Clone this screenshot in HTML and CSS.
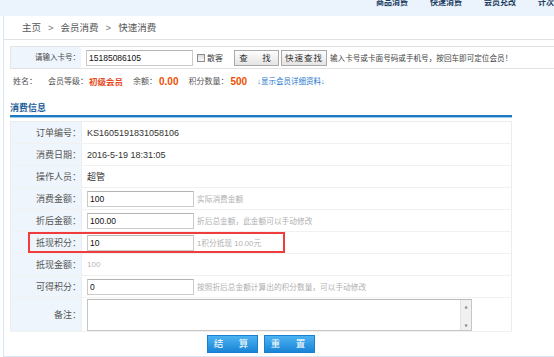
FILE: index.html
```html
<!DOCTYPE html>
<html lang="zh-CN">
<head>
<meta charset="utf-8">
<title>快速消费</title>
<link rel="stylesheet" href="styles.css">
</head>
<body>
<div class="topbar">
  <nav class="topnav">
    <a class="nav-item">商品消费</a><span class="sep"></span>
    <a class="nav-item">快速消费</a><span class="sep"></span>
    <a class="nav-item">会员充改</a><span class="sep"></span>
    <a class="nav-item">计次消费</a>
  </nav>
</div>
<div class="panel">
  <div class="crumb">主页<span class="gt">&gt;</span>会员消费<span class="gt">&gt;</span>快速消费</div>

  <div class="search">
    <div class="search-label">请输入卡号：</div>
    <div class="search-body">
      <input class="inp" type="text" value="15185086105">
      <label class="chk"><span class="box"></span>散客</label>
      <button class="btn-gray btn-find">查　找</button>
      <button class="btn-gray btn-quick">快速查找</button>
      <span class="search-tip">输入卡号或卡面号码或手机号，按回车即可定位会员！</span>
    </div>
  </div>

  <div class="info">
    <span class="info-label name">姓名：</span>
    <span class="info-label">会员等级：</span><span class="lv">初级会员</span>
    <span class="info-label">余额：</span><span class="num">0.00</span>
    <span class="info-label">积分数量：</span><span class="num">500</span>
    <a class="more">↓显示会员详细资料↓</a>
  </div>

  <div class="section-title">消费信息</div>

  <table class="form">
    <tr><th>订单编号：</th><td class="val">KS1605191831058106</td></tr>
    <tr><th>消费日期：</th><td class="val">2016-5-19 18:31:05</td></tr>
    <tr><th>操作人员：</th><td class="val">超管</td></tr>
    <tr><th>消费金额：</th><td><input class="inp" type="text" value="100"><span class="hint">实际消费金额</span></td></tr>
    <tr><th>折后金额：</th><td><input class="inp" type="text" value="100.00"><span class="hint">折后总金额，此金额可以手动修改</span></td></tr>
    <tr><th>抵现积分：</th><td><input class="inp" type="text" value="10"><span class="hint">1积分抵现 10.00元</span></td></tr>
    <tr><th>抵现金额：</th><td class="val muted">100</td></tr>
    <tr><th>可得积分：</th><td><input class="inp" type="text" value="0"><span class="hint">按照折后总金额计算出的积分数量，可以手动修改</span></td></tr>
    <tr class="tall"><th>备注：</th><td>
      <div class="memo">
        <textarea class="memo-text"></textarea>
        <div class="memo-bar"><span class="arr">▲</span><span class="arr">▼</span></div>
      </div>
    </td></tr>
  </table>

  <div class="actions">
    <button class="btn-blue">结　算</button>
    <button class="btn-blue">重　置</button>
  </div>
</div>
<div class="mark"></div>
</body>
</html>
```
FILE: styles.css
```css
* { box-sizing: border-box; }
html, body { margin: 0; padding: 0; }
body {
  width: 554px;
  height: 357px;
  overflow: hidden;
  background: #fff;
  font-family: "Liberation Sans", "Noto Sans CJK TC", sans-serif;
  font-size: 9px;
  color: #444;
  position: relative;
}

/* top bar */
.topbar {
  height: 16px;
  background: #ebf4fc;
  overflow: hidden;
}
.topnav {
  display: flex;
  align-items: flex-start;
  padding-left: 376px;
  gap: 11px;
  margin-top: -2px;
  white-space: nowrap;
}
.nav-item {
  font-size: 8px;
  line-height: 10px;
  font-weight: bold;
  color: #1d3c62;
}
.sep {
  width: 1px;
  height: 8px;
  margin-top: 2px;
  background: #c6ccd3;
}

/* panel */
.panel {
  margin-left: 3px;
  height: 341px;
  border-left: 1px solid #d6e6f4;
  border-bottom: 1px solid #d9e7f4;
}
.crumb {
  height: 24px;
  line-height: 23px;
  padding-left: 18px;
  font-size: 9.5px;
  color: #555;
  border-bottom: 1px solid #e2e2e2;
}
.gt { margin: 0 7px; color: #777; }

/* search */
.search {
  margin-top: 6px;
  margin-left: 6px;
  height: 23px;
  display: flex;
  border-top: 1px solid #e3e3e3;
  border-bottom: 1px solid #e3e3e3;
  border-left: 1px solid #e6e6e6;
}
.search-label {
  width: 70px;
  background: #eff5fc;
  text-align: right;
  font-size: 7.5px;
  line-height: 21px;
  padding-right: 1px;
  color: #444;
}
.search-body {
  display: flex;
  align-items: center;
  padding-left: 5px;
  white-space: nowrap;
}
.inp {
  width: 107px;
  height: 16px;
  border: 1px solid #cacaca;
  border-top-color: #b4b4b4;
  padding: 0 2px;
  margin: 0;
  font-family: inherit;
  font-size: 8.5px;
  color: #111;
  outline: none;
}
.chk {
  display: flex;
  align-items: center;
  margin-left: 4px;
  font-size: 8px;
  color: #444;
}
.box {
  width: 8px;
  height: 8px;
  border: 1px solid #8c8c8c;
  background: linear-gradient(#dcdcdc, #fafafa);
  margin-right: 2px;
}
.btn-gray {
  height: 16px;
  margin: 0;
  padding: 0;
  border: 1px solid #a9a9a9;
  background: linear-gradient(#fdfdfd, #e4e4e4);
  font-family: inherit;
  font-size: 8.5px;
  color: #333;
  line-height: 14px;
}
.btn-find { width: 45px; margin-left: 11px; letter-spacing: 3px; }
.btn-quick { width: 46px; margin-left: 2px; letter-spacing: 1px; }
.search-tip { margin-left: 3px; font-size: 7.6px; color: #444; }

/* info */
.info {
  height: 26px;
  line-height: 26px;
  padding-left: 9px;
  font-size: 8px;
  white-space: nowrap;
  display: flex;
  align-items: center;
}
.info-label { color: #555; margin-left: 10px; }
.info-label.name { margin-left: 0; margin-right: 1px; }
.lv { color: #e8491d; font-weight: bold; font-size: 8.5px; margin-left: 1px; }
.num { color: #f05000; font-weight: bold; font-size: 10px; margin-left: 2px; }
.more { color: #2475cc; margin-left: 10px; font-size: 7.5px; }

/* section */
.section-title {
  margin-left: 6px;
  width: 502px;
  height: 22px;
  padding-top: 7px;
  line-height: 12px;
  font-size: 9px;
  font-weight: bold;
  color: #1d5d98;
  border-bottom: 2px solid #1f79bf;
  box-shadow: 0 1px 0 #9ccaec;
}

/* form table */
.form {
  margin: 4px 0 0 6px;
  width: 502px;
  border-collapse: collapse;
  border: 1px solid #ececec;
}
.form th, .form td {
  height: 22px;
  padding: 0;
  border-bottom: 1px solid #f1f1f1;
}
.form th {
  width: 71px;
  background: #eff5fc;
  border-right: 1px solid #e8eef4;
  font-weight: normal;
  font-size: 9px;
  color: #555;
  text-align: right;
  white-space: nowrap;
}
.form td { padding-left: 5px; white-space: nowrap; }
.form td.val { font-size: 9px; color: #333; }
.form td.muted { font-size: 8px; color: #b5b5b5; }
.form td .inp { vertical-align: middle; }
.hint {
  margin-left: 3px;
  font-size: 7.7px;
  color: #b0b0b0;
  vertical-align: middle;
}
.form tr.tall th, .form tr.tall td { height: 34px; }
.memo {
  display: flex;
  width: 385px;
  height: 32px;
  border: 1px solid #c6c6c6;
  border-top-color: #b8b8b8;
}
.memo-text {
  flex: 1;
  border: 0;
  margin: 0;
  padding: 2px;
  resize: none;
  outline: none;
  font-family: inherit;
  font-size: 9px;
}
.memo-bar {
  width: 11px;
  background: #f0f0f0;
  border-left: 1px solid #e2e2e2;
  display: flex;
  flex-direction: column;
  justify-content: space-between;
  align-items: center;
  padding: 4px 0 2px;
}
.arr { font-size: 4px; line-height: 5px; color: #888; font-family: "DejaVu Sans", sans-serif; }

/* actions */
.actions {
  margin: 3px 0 0 6px;
  width: 502px;
  display: flex;
  justify-content: center;
  gap: 6px;
}
.btn-blue {
  width: 51px;
  height: 18px;
  margin: 0;
  padding: 0;
  border: 1px solid #1b7fd0;
  background: linear-gradient(#4cb3f2, #1a84d6);
  color: #fff;
  font-family: inherit;
  font-size: 9.5px;
  letter-spacing: 3px;
  line-height: 16px;
}

/* annotation */
.mark {
  position: absolute;
  left: 28px;
  top: 232px;
  width: 257px;
  height: 21px;
  border: 2px solid #ef3d3d;
}
```
